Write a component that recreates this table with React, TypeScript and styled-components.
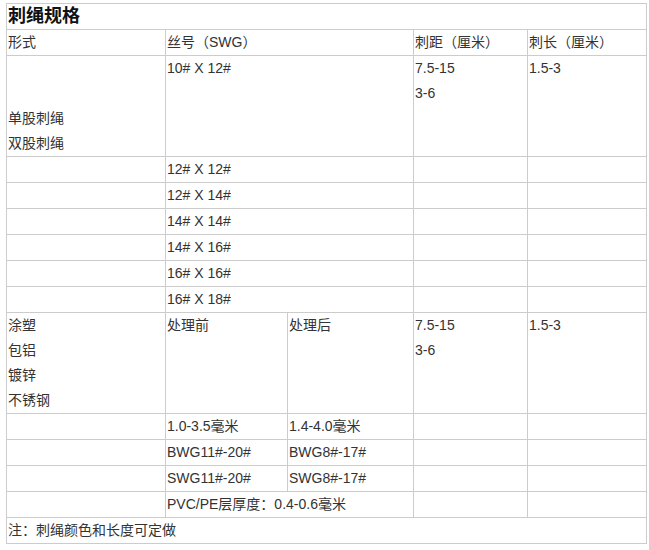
import React from "react";
import styled, { createGlobalStyle } from "styled-components";

const GlobalStyle = createGlobalStyle`
  html, body {
    margin: 0;
    padding: 0;
    background: #ffffff;
  }
`;

const Page = styled.div`
  padding: 3px 0 0 6px;
  font-family: "Liberation Sans", "Noto Sans CJK SC", sans-serif;
  font-size: 14px;
  color: #333333;
`;

const SpecTable = styled.table`
  width: 640px;
  table-layout: fixed;
  border-collapse: collapse;
`;

const Cell = styled.td<{ $tall?: boolean }>`
  border: 1px solid #cccccc;
  padding: 0 1px;
  height: ${(p) => (p.$tall ? "100px" : "25px")};
  line-height: 25px;
  vertical-align: top;
  white-space: nowrap;
  overflow: hidden;
`;

const TitleCell = styled(Cell)`
  font-size: 18px;
  font-weight: bold;
  color: #111111;
`;

const Line = styled.div`
  height: 25px;
`;

const wireRows = ["12# X 12#", "12# X 14#", "14# X 14#", "14# X 16#", "16# X 16#", "16# X 18#"];

const treatRows: [string, string][] = [
  ["1.0-3.5毫米", "1.4-4.0毫米"],
  ["BWG11#-20#", "BWG8#-17#"],
  ["SWG11#-20#", "SWG8#-17#"],
];

function Lines({ items }: { items: string[] }) {
  return (
    <>
      {items.map((t, i) => (
        <Line key={i}>{t}</Line>
      ))}
    </>
  );
}

export default function App() {
  return (
    <Page>
      <GlobalStyle />
      <SpecTable>
        <colgroup>
          <col style={{ width: 159 }} />
          <col style={{ width: 122 }} />
          <col style={{ width: 126 }} />
          <col style={{ width: 114 }} />
          <col style={{ width: 119 }} />
        </colgroup>
        <tbody>
          <tr>
            <TitleCell colSpan={5}>刺绳规格</TitleCell>
          </tr>
          <tr>
            <Cell>形式</Cell>
            <Cell colSpan={2}>丝号（SWG）</Cell>
            <Cell>刺距（厘米）</Cell>
            <Cell>刺长（厘米）</Cell>
          </tr>
          <tr>
            <Cell $tall>
              <Lines items={["", "", "单股刺绳", "双股刺绳"]} />
            </Cell>
            <Cell $tall colSpan={2}>
              10# X 12#
            </Cell>
            <Cell $tall>
              <Lines items={["7.5-15", "3-6"]} />
            </Cell>
            <Cell $tall>1.5-3</Cell>
          </tr>
          {wireRows.map((w) => (
            <tr key={w}>
              <Cell />
              <Cell colSpan={2}>{w}</Cell>
              <Cell />
              <Cell />
            </tr>
          ))}
          <tr>
            <Cell $tall>
              <Lines items={["涂塑", "包铝", "镀锌", "不锈钢"]} />
            </Cell>
            <Cell $tall>处理前</Cell>
            <Cell $tall>处理后</Cell>
            <Cell $tall>
              <Lines items={["7.5-15", "3-6"]} />
            </Cell>
            <Cell $tall>1.5-3</Cell>
          </tr>
          {treatRows.map(([before, after]) => (
            <tr key={before}>
              <Cell />
              <Cell>{before}</Cell>
              <Cell>{after}</Cell>
              <Cell />
              <Cell />
            </tr>
          ))}
          <tr>
            <Cell />
            <Cell colSpan={2}>PVC/PE层厚度：0.4-0.6毫米</Cell>
            <Cell />
            <Cell />
          </tr>
          <tr>
            <Cell colSpan={5}>注：刺绳颜色和长度可定做</Cell>
          </tr>
        </tbody>
      </SpecTable>
    </Page>
  );
}
